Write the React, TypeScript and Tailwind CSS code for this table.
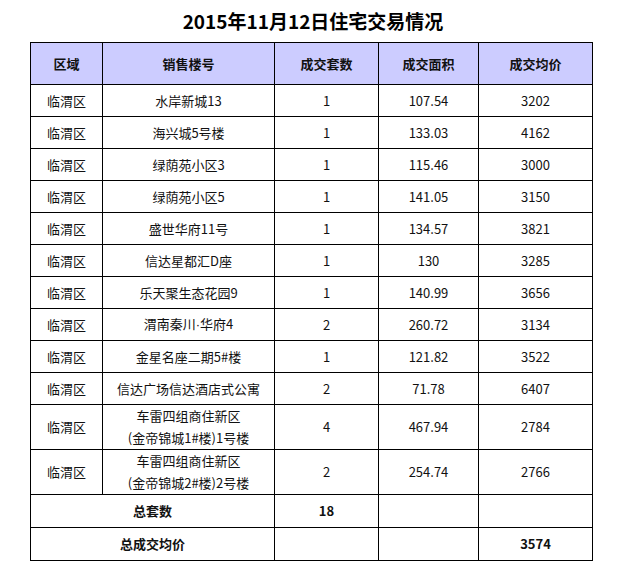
import React from "react";

type Row = { area: string; name: React.ReactNode[]; count: string; size: string; price: string };

const rows: Row[] = [
  { area: "临渭区", name: ["水岸新城13"], count: "1", size: "107.54", price: "3202" },
  { area: "临渭区", name: ["海兴城5号楼"], count: "1", size: "133.03", price: "4162" },
  { area: "临渭区", name: ["绿荫苑小区3"], count: "1", size: "115.46", price: "3000" },
  { area: "临渭区", name: ["绿荫苑小区5"], count: "1", size: "141.05", price: "3150" },
  { area: "临渭区", name: ["盛世华府11号"], count: "1", size: "134.57", price: "3821" },
  { area: "临渭区", name: ["信达星都汇D座"], count: "1", size: "130", price: "3285" },
  { area: "临渭区", name: ["乐天聚生态花园9"], count: "1", size: "140.99", price: "3656" },
  {
    area: "临渭区",
    name: [
      <>
        渭南秦川<span className="font-['Liberation_Sans',sans-serif]">·</span>华府4
      </>,
    ],
    count: "2",
    size: "260.72",
    price: "3134",
  },
  { area: "临渭区", name: ["金星名座二期5#楼"], count: "1", size: "121.82", price: "3522" },
  { area: "临渭区", name: ["信达广场信达酒店式公寓"], count: "2", size: "71.78", price: "6407" },
  { area: "临渭区", name: ["车雷四组商住新区", "(金帝锦城1#楼)1号楼"], count: "4", size: "467.94", price: "2784" },
  { area: "临渭区", name: ["车雷四组商住新区", "(金帝锦城2#楼)2号楼"], count: "2", size: "254.74", price: "2766" },
];

const cell = "border border-black text-center align-middle p-0";

export default function App() {
  return (
    <div className="w-[626px] h-[577px] bg-white text-[#111] font-['Noto_Sans_CJK_SC','Noto_Sans',sans-serif]">
      <h1 className="pt-[8px] h-[42px] text-center text-[19px] font-bold leading-[26px] text-black">
        2015年11月12日住宅交易情况
      </h1>
      <table className="ml-[30px] w-[562px] table-fixed border-collapse text-[13px]">
        <colgroup>
          <col className="w-[72px]" />
          <col className="w-[172px]" />
          <col className="w-[104px]" />
          <col className="w-[100px]" />
          <col className="w-[114px]" />
        </colgroup>
        <thead>
          <tr className="h-[42px] bg-[#ccccff] font-bold">
            <th className={cell}>区域</th>
            <th className={cell}>销售楼号</th>
            <th className={cell}>成交套数</th>
            <th className={cell}>成交面积</th>
            <th className={cell}>成交均价</th>
          </tr>
        </thead>
        <tbody>
          {rows.map((r, i) => (
            <tr key={i} className={r.name.length > 1 ? "h-[43px]" : "h-[32px]"}>
              <td className={cell}>{r.area}</td>
              <td className={`${cell} leading-[22px]`}>
                {r.name.map((n, j) => (
                  <div key={j}>{n}</div>
                ))}
              </td>
              <td className={cell}>{r.count}</td>
              <td className={cell}>{r.size}</td>
              <td className={cell}>{r.price}</td>
            </tr>
          ))}
          <tr className="h-[33px] font-bold">
            <td className={cell} colSpan={2}>总套数</td>
            <td className={cell}>18</td>
            <td className={cell}></td>
            <td className={cell}></td>
          </tr>
          <tr className="h-[33px] font-bold">
            <td className={cell} colSpan={2}>总成交均价</td>
            <td className={cell}></td>
            <td className={cell}></td>
            <td className={cell}>3574</td>
          </tr>
        </tbody>
      </table>
    </div>
  );
}
